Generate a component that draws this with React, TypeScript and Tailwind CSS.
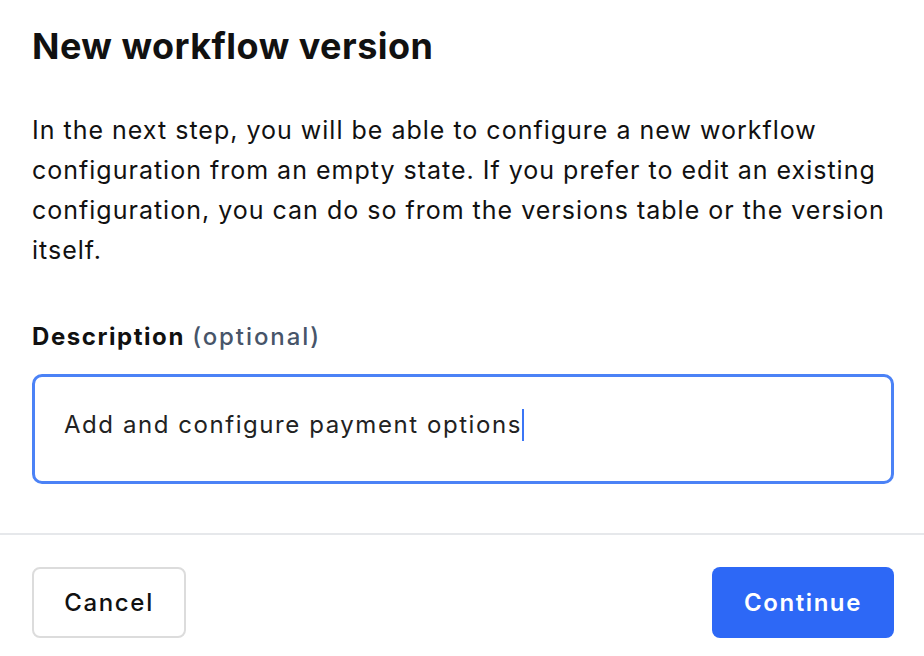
import React from "react";

const App: React.FC = () => {
  return (
    <div className="w-[924px] h-[656px] overflow-hidden bg-white font-['Inter','Liberation_Sans',sans-serif] text-[#111111]">
      {/* Body */}
      <div className="pl-8 pr-[30px] pt-6">
        <h1 className="text-[36px] leading-[44px] font-bold tracking-[0.013em]">New workflow version</h1>

        <p className="mt-[42px] text-[25px] leading-[40px] tracking-[0.04em]">
          In the next step, you will be able to configure a new workflow configuration from an empty state. If you
          prefer to edit an existing configuration, you can do so from the versions table or the version itself.
        </p>

        <label className="mt-[51px] block text-[24px] leading-[32px] font-bold tracking-[0.065em]">
          Description <span className="font-medium tracking-[0.08em] text-[#475569]">(optional)</span>
        </label>

        <div className="mt-[21px] h-[110px] rounded-[10px] border-[3px] border-[#4b82f6] pl-[29px] pt-[28px]">
          <div className="flex items-center text-[24px] leading-[40px] tracking-[0.065em] text-[#222222]">
            <span>Add and configure payment options</span>
            <span className="inline-block h-[32px] w-[2px] bg-[#3b76f6]"></span>
          </div>
        </div>
      </div>

      {/* Footer */}
      <div className="mt-[49px] h-[2px] bg-[#e6e8eb]"></div>
      <div className="flex items-center justify-between pl-8 pr-[30px] pt-8">
        <button className="h-[71px] w-[154px] rounded-[8px] border-2 border-[#dcdcdc] bg-white text-[24px] font-medium tracking-[0.07em] text-[#111111]">
          Cancel
        </button>
        <button className="h-[71px] w-[182px] rounded-[8px] bg-[#2d68f6] text-[24px] font-semibold tracking-[0.065em] text-white">
          Continue
        </button>
      </div>
    </div>
  );
};

export default App;
